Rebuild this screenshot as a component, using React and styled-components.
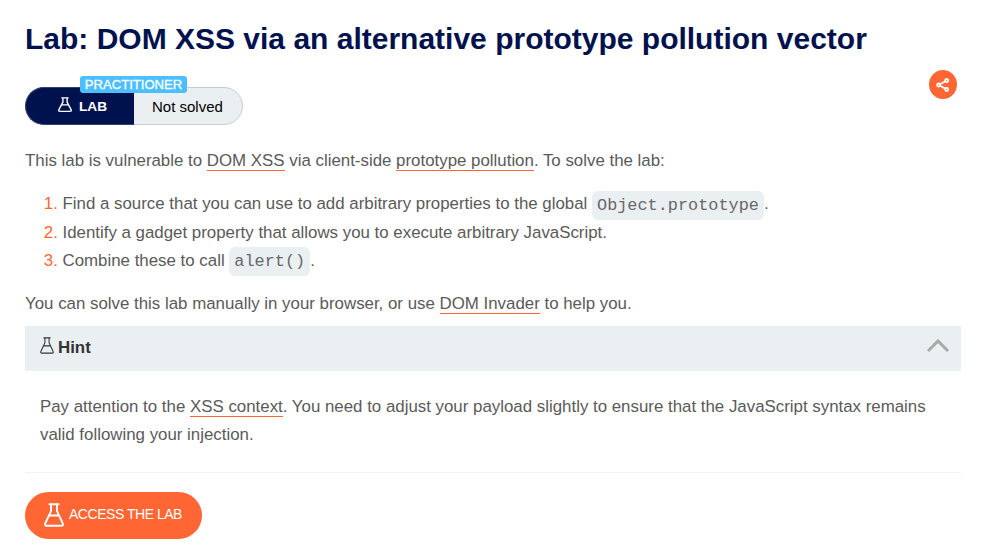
import React from "react";
import styled, { createGlobalStyle } from "styled-components";

const GlobalStyle = createGlobalStyle`
  * { box-sizing: border-box; }
  body {
    margin: 0;
    background: #fff;
    color: #5a5a5a;
    font-family: Arial, "Liberation Sans", sans-serif;
    font-size: 16.86px;
    line-height: 28px;
  }
`;

const Page = styled.main`
  width: 996px;
  height: 547px;
  padding: 20px 35px 0 25px;
  overflow: hidden;
`;

const Title = styled.h1`
  margin: 0;
  height: 38px;
  color: #00124e;
  font-size: 30px;
  font-weight: 700;
  line-height: 38px;
  white-space: nowrap;
`;

const StatusRow = styled.div`
  display: flex;
  justify-content: space-between;
  align-items: flex-start;
  height: 67px;
  margin-top: 12px;
  padding-right: 4px;
`;

const Status = styled.div`
  position: relative;
  display: flex;
  width: 218px;
  height: 38px;
  margin-top: 17px;
  border: 1px solid #c8cdd0;
  border-radius: 19px;
  background: #eaeff2;
  font-size: 15px;
  line-height: 38px;
  color: #000;
`;

const StatusKind = styled.div`
  display: flex;
  align-items: center;
  width: 109px;
  margin: -1px 0 -1px -1px;
  padding-left: 32px;
  gap: 7px;
  border: 1px solid #33416f;
  border-right: 0;
  border-radius: 19px 0 0 19px;
  background: #00124e;
  color: #fff;
  font-size: 13.7px;
  font-weight: 700;
  line-height: 20px;
  svg { margin-top: -3px; }
`;

const StatusName = styled.span`
  margin-top: 1px;
`;

const StatusState = styled.div`
  flex: 1;
  padding-left: 18px;
  white-space: nowrap;
`;

const Level = styled.span`
  position: absolute;
  left: 54px;
  top: -12px;
  width: 107px;
  height: 17px;
  border-radius: 3px;
  background: #4bbfff;
  color: #fff;
  font-size: 13.1px;
  line-height: 17px;
  text-align: center;
  -webkit-text-stroke: 0.3px #fff;
`;

const ShareButton = styled.button`
  display: flex;
  align-items: center;
  justify-content: center;
  width: 28px;
  height: 29px;
  padding: 0;
  border: 0;
  border-radius: 50%;
  background: #ff6633;
`;

const Paragraph = styled.p`
  margin: ${(p) => p.$top || 0}px 0 0;
  height: 28px;
  white-space: nowrap;
`;

const Link = styled.a`
  color: #5a5a5a;
  text-decoration: none;
  border-bottom: 1px solid #ff6633;
`;

const Steps = styled.ol`
  margin: 15px 0 0;
  padding: 0 0 0 37.5px;
`;

const Step = styled.li`
  height: 28.5px;
  line-height: 28.5px;
  white-space: nowrap;
  &::marker { color: #ff6633; }
`;

const Code = styled.code`
  padding: 5px;
  border-radius: 6px;
  background: #eaeff2;
  color: #686868;
  font-family: "Courier New", "Liberation Mono", monospace;
  font-size: 16.86px;
  line-height: 1;
  vertical-align: ${(p) => p.$shift || -1}px;
`;

const HintBar = styled.div`
  display: flex;
  align-items: center;
  width: 936px;
  height: 45px;
  margin-top: 8px;
  padding: 0 12px 0 15px;
  background: #eaeff2;
  color: #333;
  font-weight: 700;
  svg { margin-top: -5px; }
`;

const HintLabel = styled.span`
  flex: 1;
  margin: -1px 0 0 4px;
`;

const HintBody = styled.div`
  height: 102px;
  padding: 22px 15px 0;
  border-bottom: 1px solid #f3f3f5;
`;

const AccessButton = styled.button`
  display: flex;
  align-items: center;
  width: 177px;
  height: 47px;
  margin-top: 19px;
  padding: 0 0 0 19px;
  gap: 5px;
  border: 0;
  border-radius: 24px;
  background: #ff6633;
  color: #fff;
  font: 14px Arial, "Liberation Sans", sans-serif;
  letter-spacing: -0.47px;
  white-space: nowrap;
`;

const AccessLabel = styled.span`
  margin-top: -3px;
`;

function Flask({ width, height, stroke = 1.5 }) {
  return (
    <svg width={width} height={height} viewBox="0 0 20 24" preserveAspectRatio="none" fill="none" stroke="currentColor" strokeWidth={stroke} strokeLinejoin="round" strokeLinecap="round">
      <path d="M5.5 1.2h9M7 1.2v7L1.2 20.5q-.7 2.2 1.4 2.3h14.8q2.1-.1 1.4-2.3L13 8.2v-7M5 12.5h10" />
    </svg>
  );
}

export default function App() {
  return (
    <>
      <GlobalStyle />
      <Page>
        <Title>Lab: DOM XSS via an alternative prototype pollution vector</Title>
        <StatusRow>
          <Status>
            <StatusKind>
              <Flask width={14} height={15} stroke={2} />
              <StatusName>LAB</StatusName>
            </StatusKind>
            <StatusState>Not solved</StatusState>
            <Level>PRACTITIONER</Level>
          </Status>
          <ShareButton aria-label="Share">
            <svg width="14" height="14" viewBox="0 0 14 14" fill="none" stroke="#fff" strokeWidth="1.8">
              <path d="M4 6.2 9.3 3.4M4 7.8l5.3 2.8" />
              <circle cx="2.6" cy="7" r="1.5" />
              <circle cx="10.7" cy="2.5" r="1.5" />
              <circle cx="10.7" cy="11.5" r="1.5" />
            </svg>
          </ShareButton>
        </StatusRow>
        <Paragraph $top={10}>
          This lab is vulnerable to <Link>DOM XSS</Link> via client-side <Link>prototype pollution</Link>. To solve the lab:
        </Paragraph>
        <Steps>
          <Step>Find a source that you can use to add arbitrary properties to the global <Code>Object.prototype</Code>.</Step>
          <Step>Identify a gadget property that allows you to execute arbitrary JavaScript.</Step>
          <Step>Combine these to call <Code $shift={-0.4}>alert()</Code>.</Step>
        </Steps>
        <Paragraph $top={14}>
          You can solve this lab manually in your browser, or use <Link>DOM Invader</Link> to help you.
        </Paragraph>
        <HintBar>
          <Flask width={14} height={17} stroke={1.5} />
          <HintLabel>Hint</HintLabel>
          <svg width="22" height="14" viewBox="0 0 22 14" fill="none" stroke="#aaa" strokeWidth="3">
            <path d="M1 12 11 2l10 10" />
          </svg>
        </HintBar>
        <HintBody>
          <Paragraph>
            Pay attention to the <Link>XSS context</Link>. You need to adjust your payload slightly to ensure that the JavaScript syntax remains
          </Paragraph>
          <Paragraph>valid following your injection.</Paragraph>
        </HintBody>
        <AccessButton>
          <Flask width={20} height={24} stroke={1.9} />
          <AccessLabel>ACCESS THE LAB</AccessLabel>
        </AccessButton>
      </Page>
    </>
  );
}
